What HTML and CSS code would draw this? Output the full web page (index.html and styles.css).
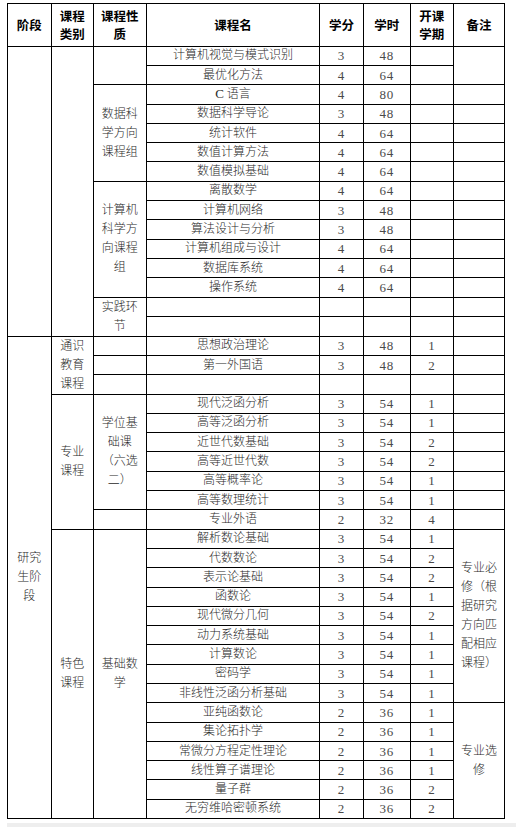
FILE: index.html
```html
<!DOCTYPE html>
<html lang="zh-CN">
<head>
<meta charset="utf-8">
<title>课程设置表</title>
<link rel="stylesheet" href="styles.css">
</head>
<body>
<table class="course-table">
  <colgroup>
    <col class="c-stage">
    <col class="c-type">
    <col class="c-nature">
    <col class="c-name">
    <col class="c-credit">
    <col class="c-hours">
    <col class="c-term">
    <col class="c-note">
  </colgroup>
  <thead>
    <tr class="head-row">
      <th>阶段</th>
      <th>课程<br>类别</th>
      <th>课程性<br>质</th>
      <th>课程名</th>
      <th>学分</th>
      <th>学时</th>
      <th>开课<br>学期</th>
      <th>备注</th>
    </tr>
  </thead>
  <tbody>
    <tr>
      <td rowspan="15"></td>
      <td rowspan="15"></td>
      <td rowspan="2"></td>
      <td>计算机视觉与模式识别</td><td class="num">3</td><td class="num">48</td><td></td>
      <td rowspan="2"></td>
    </tr>
    <tr><td>最优化方法</td><td class="num">4</td><td class="num">64</td><td></td></tr>
    <tr>
      <td rowspan="5" class="multi">数据科<br>学方向<br>课程组</td>
      <td><span class="lat">C</span> 语言</td><td class="num">4</td><td class="num">80</td><td></td><td></td>
    </tr>
    <tr><td>数据科学导论</td><td class="num">3</td><td class="num">48</td><td></td><td></td></tr>
    <tr><td>统计软件</td><td class="num">4</td><td class="num">64</td><td></td><td></td></tr>
    <tr><td>数值计算方法</td><td class="num">4</td><td class="num">64</td><td></td><td></td></tr>
    <tr><td>数值模拟基础</td><td class="num">4</td><td class="num">64</td><td></td><td></td></tr>
    <tr>
      <td rowspan="6" class="multi">计算机<br>科学方<br>向课程<br>组</td>
      <td>离散数学</td><td class="num">4</td><td class="num">64</td><td></td><td></td>
    </tr>
    <tr><td>计算机网络</td><td class="num">3</td><td class="num">48</td><td></td><td></td></tr>
    <tr><td>算法设计与分析</td><td class="num">3</td><td class="num">48</td><td></td><td></td></tr>
    <tr><td>计算机组成与设计</td><td class="num">4</td><td class="num">64</td><td></td><td></td></tr>
    <tr><td>数据库系统</td><td class="num">4</td><td class="num">64</td><td></td><td></td></tr>
    <tr><td>操作系统</td><td class="num">4</td><td class="num">64</td><td></td><td></td></tr>
    <tr>
      <td rowspan="2" class="multi">实践环<br>节</td>
      <td></td><td></td><td></td><td></td><td></td>
    </tr>
    <tr><td></td><td></td><td></td><td></td><td></td></tr>

    <tr>
      <td rowspan="25" class="multi">研究<br>生阶<br>段</td>
      <td rowspan="3" class="multi">通识<br>教育<br>课程</td>
      <td></td>
      <td>思想政治理论</td><td class="num">3</td><td class="num">48</td><td class="num">1</td><td></td>
    </tr>
    <tr><td></td><td>第一外国语</td><td class="num">3</td><td class="num">48</td><td class="num">2</td><td></td></tr>
    <tr><td></td><td></td><td></td><td></td><td></td><td></td></tr>
    <tr>
      <td rowspan="7" class="multi">专业<br>课程</td>
      <td rowspan="6" class="multi">学位基<br>础课<br>（六选<br>二）</td>
      <td>现代泛函分析</td><td class="num">3</td><td class="num">54</td><td class="num">1</td><td></td>
    </tr>
    <tr><td>高等泛函分析</td><td class="num">3</td><td class="num">54</td><td class="num">1</td><td></td></tr>
    <tr><td>近世代数基础</td><td class="num">3</td><td class="num">54</td><td class="num">2</td><td></td></tr>
    <tr><td>高等近世代数</td><td class="num">3</td><td class="num">54</td><td class="num">2</td><td></td></tr>
    <tr><td>高等概率论</td><td class="num">3</td><td class="num">54</td><td class="num">1</td><td></td></tr>
    <tr><td>高等数理统计</td><td class="num">3</td><td class="num">54</td><td class="num">1</td><td></td></tr>
    <tr><td></td><td>专业外语</td><td class="num">2</td><td class="num">32</td><td class="num">4</td><td></td></tr>
    <tr>
      <td rowspan="15" class="multi">特色<br>课程</td>
      <td rowspan="15" class="multi">基础数<br>学</td>
      <td>解析数论基础</td><td class="num">3</td><td class="num">54</td><td class="num">1</td>
      <td rowspan="9" class="multi">专业必<br>修（根<br>据研究<br>方向匹<br>配相应<br>课程）</td>
    </tr>
    <tr><td>代数数论</td><td class="num">3</td><td class="num">54</td><td class="num">2</td></tr>
    <tr><td>表示论基础</td><td class="num">3</td><td class="num">54</td><td class="num">2</td></tr>
    <tr><td>函数论</td><td class="num">3</td><td class="num">54</td><td class="num">1</td></tr>
    <tr><td>现代微分几何</td><td class="num">3</td><td class="num">54</td><td class="num">2</td></tr>
    <tr><td>动力系统基础</td><td class="num">3</td><td class="num">54</td><td class="num">1</td></tr>
    <tr><td>计算数论</td><td class="num">3</td><td class="num">54</td><td class="num">1</td></tr>
    <tr><td>密码学</td><td class="num">3</td><td class="num">54</td><td class="num">1</td></tr>
    <tr><td>非线性泛函分析基础</td><td class="num">3</td><td class="num">54</td><td class="num">1</td></tr>
    <tr>
      <td>亚纯函数论</td><td class="num">2</td><td class="num">36</td><td class="num">1</td>
      <td rowspan="6" class="multi">专业选<br>修</td>
    </tr>
    <tr><td>集论拓扑学</td><td class="num">2</td><td class="num">36</td><td class="num">1</td></tr>
    <tr><td>常微分方程定性理论</td><td class="num">2</td><td class="num">36</td><td class="num">1</td></tr>
    <tr><td>线性算子谱理论</td><td class="num">2</td><td class="num">36</td><td class="num">1</td></tr>
    <tr><td>量子群</td><td class="num">2</td><td class="num">36</td><td class="num">2</td></tr>
    <tr><td>无穷维哈密顿系统</td><td class="num">2</td><td class="num">36</td><td class="num">2</td></tr>
  </tbody>
</table>
<div class="page-edge"></div>
</body>
</html>
```

FILE: styles.css
```css
html {
  background: #ffffff;
}

body {
  margin: 0;
  padding: 3px 0 0 7px;
  background: #ffffff;
}

.course-table {
  border-collapse: collapse;
  table-layout: fixed;
  width: 498px;
  font-family: "Liberation Serif", "Noto Sans CJK SC", serif;
  font-size: 12px;
  font-weight: 300;
  color: #2a2a2a;
}

.c-stage { width: 43.5px; }
.c-type { width: 42.5px; }
.c-nature { width: 52.7px; }
.c-name { width: 173.6px; }
.c-credit { width: 43.4px; }
.c-hours { width: 47.3px; }
.c-term { width: 42.7px; }
.c-note { width: 51.6px; }

.course-table th,
.course-table td {
  border: 1px solid #000;
  padding: 0;
  text-align: center;
  vertical-align: middle;
  overflow: hidden;
  white-space: nowrap;
}

.course-table th {
  font-family: "Noto Sans CJK SC", sans-serif;
  font-weight: 700;
  font-size: 12.5px;
  line-height: 18px;
  color: #000;
}

.head-row th {
  height: 41.7px;
}

.course-table tbody tr {
  height: 19.3px;
}

.course-table td {
  line-height: 17px;
  height: 18.3px;
}

.course-table td.multi {
  line-height: 19px;
}

.num {
  font-size: 13px;
  font-weight: 400;
  letter-spacing: 0.8px;
  color: #4a4a4a;
}

.lat {
  font-size: 13px;
  font-weight: 400;
}

.page-edge {
  height: 5px;
  margin-top: 4px;
  background: #eeeeee;
}
```
